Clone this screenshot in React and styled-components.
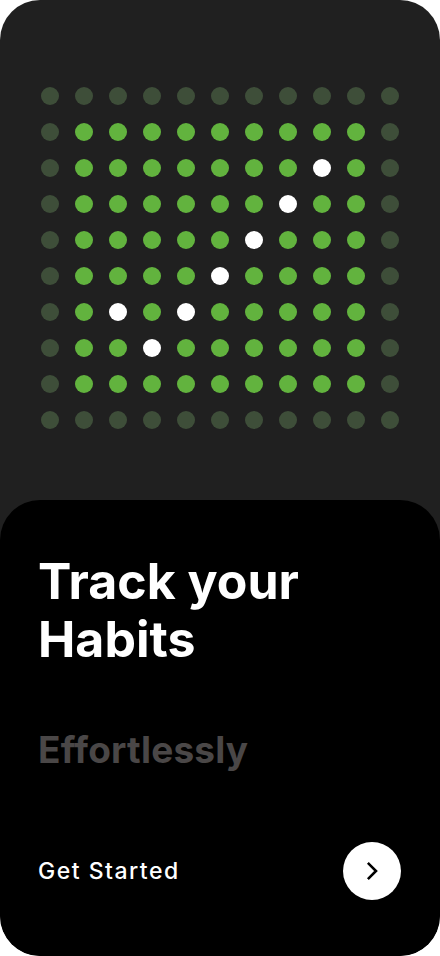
import React from 'react'
import styled, { createGlobalStyle } from 'styled-components'

const GlobalStyle = createGlobalStyle`
  html, body {
    margin: 0;
    padding: 0;
    background: #ffffff;
  }
  body {
    font-family: Inter, "Noto Sans", sans-serif;
  }
`

const ROWS = 10
const COLS = 11
// checkmark cells, [row, col]
const CHECK = ['2-8', '3-7', '4-6', '5-5', '6-4', '6-2', '7-3']

const dotKind = (r, c) => {
  if (CHECK.includes(`${r}-${c}`)) return 'white'
  if (r === 0 || r === ROWS - 1 || c === 0 || c === COLS - 1) return 'dim'
  return 'green'
}

const App = () => {
  const dots = []
  for (let r = 0; r < ROWS; r++) {
    for (let c = 0; c < COLS; c++) {
      dots.push(<Dot key={`${r}-${c}`} $kind={dotKind(r, c)} />)
    }
  }

  return (
    <>
      <GlobalStyle />
      <Screen>
        <Hero>
          <DotGrid>{dots}</DotGrid>
        </Hero>
        <Card>
          <Title>Track your<br />Habits</Title>
          <Subtitle>Effortlessly</Subtitle>
          <Footer>
            <StartLabel>Get Started</StartLabel>
            <NextButton aria-label="Get Started">
              <svg width="20" height="20" viewBox="0 0 20 20" fill="none">
                <path d="M6.8 2.8 L14 10 L6.8 17.2" stroke="#000" strokeWidth="2.6" strokeLinecap="square" strokeLinejoin="miter" />
              </svg>
            </NextButton>
          </Footer>
        </Card>
      </Screen>
    </>
  )
}

export default App

const Screen = styled.div`
  width: 440px;
  height: 956px;
  background: #202020;
  border-radius: 40px;
  overflow: hidden;
  display: flex;
  flex-direction: column;
`

const Hero = styled.div`
  height: 500px;
  flex-shrink: 0;
  display: flex;
  justify-content: center;
  padding-top: 87px;
  box-sizing: border-box;
`

const DotGrid = styled.div`
  display: grid;
  grid-template-columns: repeat(11, 18px);
  grid-auto-rows: 18px;
  column-gap: 16px;
  row-gap: 18px;
  align-content: start;
`

const dotColors = {
  dim: '#3e4e39',
  green: '#62b33e',
  white: '#ffffff',
}

const Dot = styled.span`
  width: 18px;
  height: 18px;
  border-radius: 50%;
  background: ${p => dotColors[p.$kind]};
`

const Card = styled.div`
  flex: 1;
  background: #000;
  border-radius: 40px;
  padding: 52px 38px 0;
  display: flex;
  flex-direction: column;
  color: #fff;
`

const Title = styled.h1`
  margin: 0;
  font-family: Inter, "Noto Sans", sans-serif;
  font-weight: 700;
  font-size: 50px;
  line-height: 58px;
  letter-spacing: 0px;
`

const Subtitle = styled.h2`
  margin: 60px 0 0;
  font-family: Inter, "Noto Sans", sans-serif;
  font-weight: 700;
  font-size: 37px;
  line-height: 44px;
  letter-spacing: 0.2px;
  color: #4a4747;
`

const Footer = styled.div`
  margin-top: 70px;
  display: flex;
  align-items: center;
  justify-content: space-between;
  padding-right: 1px;
`

const StartLabel = styled.span`
  font-family: Inter, "Noto Sans", sans-serif;
  font-weight: 500;
  font-size: 23px;
  letter-spacing: 1.5px;
`

const NextButton = styled.button`
  width: 58px;
  height: 58px;
  border-radius: 50%;
  border: none;
  background: #fff;
  display: flex;
  align-items: center;
  justify-content: center;
  padding: 0;
  cursor: pointer;
`
